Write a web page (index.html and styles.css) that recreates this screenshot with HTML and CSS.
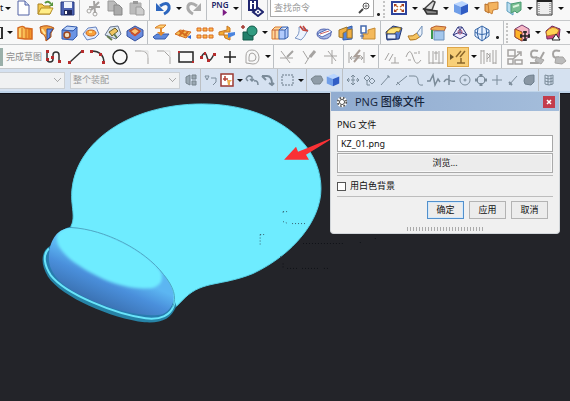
FILE: index.html
```html
<!DOCTYPE html>
<html lang="zh-CN">
<head>
<meta charset="utf-8">
<title>PNG 图像文件</title>
<link rel="stylesheet" href="styles.css">
</head>
<body>
<svg class="defs" aria-hidden="true">
  <defs>
    <linearGradient id="gold" x2="1"><stop stop-color="#ffe27a"/><stop offset="1" stop-color="#f08a20"/></linearGradient>
    <symbol id="cube" viewBox="0 0 18 18"><path fill="#b9d5ff" d="M2 5 10 2l6 3-7 3z"/><path fill="#709ee8" d="M2 5l7 3v8l-7-3z"/><path fill="#315dc5" d="M9 8l7-3v8l-7 3z"/></symbol>
    <symbol id="caret" viewBox="0 0 9 9"><path fill="#111" d="M2 3h6L5 6z"/></symbol>
  </defs>
</svg>
<header class="toolbars">
  <div class="bar bar-main">
    <span class="tail">t</span><button class="drop" aria-label="展开"><svg><use href="#caret"/></svg></button>
    <button class="tool" aria-label="新建"><svg viewBox="0 0 18 18"><path fill="#fff" stroke="#5262a5" d="M4 2h7l4 4v10H4z"/><path fill="#cfdcf4" stroke="#5262a5" d="M11 2v4h4"/></svg></button>
    <button class="tool" aria-label="打开"><svg viewBox="0 0 18 18"><path fill="#f4c94f" stroke="#a88122" d="M2 15V5h4l2 2h6v8z"/><path fill="#ffed87" stroke="#b48c24" d="M2 15l3-6h12l-3 6z"/><path stroke="#58953e" stroke-width="2" d="M9 4q3-3 6 1"/><path fill="#58953e" d="M17 3v4h-4z"/></svg></button>
    <button class="tool" aria-label="保存"><svg viewBox="0 0 18 18"><path fill="#4b61b1" stroke="#273b80" d="M3 3h13v13H3z"/><path fill="#eef2fb" d="M6 3h8v6H6z"/><path fill="#20285b" d="M6 11h8v5H6z"/><path fill="#fff" d="M7 12h2v3H7z"/></svg></button>
    <i class="sep"></i>
    <button class="tool" aria-label="剪切"><svg viewBox="0 0 18 18" class="gray"><path stroke-width="2" d="M15 3 7 11M10 2l1 12M5 8h11"/><circle cx="5" cy="12" r="2"/><circle cx="11" cy="15" r="2"/></svg></button>
    <button class="tool" aria-label="复制"><svg viewBox="0 0 18 18"><path fill="#bbb" stroke="#999" d="M2 2h6l3 3v7H2z"/><path fill="#aaa" stroke="#888" d="M8 6h5l3 3v7H8z"/></svg></button>
    <button class="tool" aria-label="粘贴"><svg viewBox="0 0 18 18"><path fill="#bbb" stroke="#aaa" d="M2 4h11v11H2z"/><path fill="#999" d="M5 2h5v3H5z"/><path fill="#ccc" stroke="#999" d="M8 8h5l3 3v5H8z"/></svg></button>
    <i class="sep"></i>
    <button class="tool" aria-label="撤销"><svg viewBox="0 0 18 18"><path stroke="#2d66bf" stroke-width="3" d="M6 7q7-5 9 0 1 5-5 8"/><path fill="#2d66bf" d="M2 4v8h8z"/></svg></button>
    <button class="drop" aria-label="撤销列表"><svg><use href="#caret"/></svg></button>
    <button class="tool" aria-label="重做"><svg viewBox="0 0 18 18"><path stroke="#aaa" stroke-width="3" d="M12 7Q5 2 3 7q-1 5 5 8"/><path fill="#aaa" d="M16 4v8H8z"/></svg></button>
    <i class="sep"></i>
    <button class="tool png" aria-label="PNG 导出">PNG<svg viewBox="0 0 8 8"><path fill="#7b1b83" d="M2 0l5 4-5 4z"/></svg></button>
    <button class="drop" aria-label="导出列表"><svg><use href="#caret"/></svg></button>
    <i class="sep"></i>
    <button class="tool" aria-label="信息"><svg viewBox="0 0 18 18"><path fill="#fff" stroke="#20266f" stroke-width="2" d="M3 1h8v10H3z"/><path stroke="#20266f" stroke-width="2" d="M7 2v2M7 5v5"/><path fill="#fff" stroke="#20266f" stroke-width="2" d="M7 13l5-4 5 4-5 4z"/><circle cx="12" cy="13" r="1" fill="#20266f"/></svg></button>
    <i class="sep"></i>
    <label class="search"><input type="search" aria-label="查找命令" placeholder="查找命令"><svg viewBox="0 0 14 14"><circle cx="9" cy="5" r="3" stroke="#555"/><circle cx="9" cy="5" r="1" stroke="#777"/><path stroke="#444" stroke-width="2" d="M6 8l-4 4"/></svg></label>
    <i class="more"></i><i class="grip"></i>
    <button class="tool" aria-label="适合窗口"><svg viewBox="0 0 18 18"><path fill="#fff" stroke="#2d449c" stroke-width="2" d="M2 3h14v12H2z"/><path stroke="#c46a2b" stroke-width="1.500" d="M5 6l3 2M13 6l-3 2M5 12l3-2M13 12l-3-2"/><path fill="#a33b22" d="M4 5h3L4 8zM14 5h-3l3 3zM4 13h3l-3-3zM14 13h-3l3-3z"/></svg></button>
    <button class="drop" aria-label="视图列表"><svg><use href="#caret"/></svg></button>
    <button class="tool" aria-label="定向视图"><svg viewBox="0 0 18 18"><path fill="#ddd" stroke="#444" stroke-width="1.500" d="M3 10l9-8 2 1-3 8z"/><path fill="#888" stroke="#333" stroke-width="1.500" d="M3 10l3 5h10v-3l-9-1z"/></svg></button>
    <button class="drop" aria-label="定向列表"><svg><use href="#caret"/></svg></button>
    <button class="tool" aria-label="着色"><svg><use href="#cube"/></svg></button>
    <button class="drop" aria-label="着色列表"><svg><use href="#caret"/></svg></button>
    <button class="tool" aria-label="显示截面"><svg viewBox="0 0 18 18"><path fill="#edaa58" stroke="#b66d27" d="M2 5l4 1v8l-4-2z"/><path fill="#f4b45f" stroke="#c98138" d="M5 4l10-1v7l-5 1-1 4-3-2z"/></svg></button>
    <button class="tool" aria-label="编辑截面"><svg viewBox="0 0 18 18"><path fill="#b9ddf0" stroke="#5f9ebc" d="M2 3l6 3v10l-6-4z"/><path fill="#79bd91" stroke="#4a9b70" d="M6 5l10-2v8l-4 3-2-2-4 2z"/><path stroke="#ddf5df" stroke-width="2" d="M8 8l6-2"/></svg></button>
    <button class="drop" aria-label="截面列表"><svg><use href="#caret"/></svg></button>
    <button class="tool" aria-label="背景"><svg viewBox="0 0 18 18"><path fill="#eee" stroke="#333" d="M1 1h15v15H1z"/><path stroke="#222" stroke-width="2" d="M1 2h15"/><path stroke="#666" stroke-dasharray="1 1" d="M3 4v11M14 4v11"/></svg></button>
    <button class="drop" aria-label="背景列表"><svg><use href="#caret"/></svg></button>
  </div>

  <div class="bar">
    <span class="edge"></span><button class="drop" aria-label="草图列表"><svg><use href="#caret"/></svg></button>
    <button class="tool" aria-label="拉伸"><svg viewBox="0 0 18 18"><path fill="url(#gold)" stroke="#d56920" stroke-width="1.500" d="M2 4q5-3 7 0l7 1v10H9l-7-1z"/><path stroke="#d56920" d="M6 4v11M10 5v10M13 5v9"/></svg></button>
    <button class="tool" aria-label="旋转"><svg viewBox="0 0 18 18"><path fill="#f2a140" stroke="#b65418" d="M2 3q7-3 14 1l-3 5v4l-5 4q0-6-5-8z"/><path fill="#6590ed" stroke="#30498d" d="M9 5h6l-3 4v4l-3 3z"/><path stroke="#ffe49b" stroke-width="2" d="M4 5l3 5"/></svg></button>
    <button class="tool" aria-label="孔"><svg viewBox="0 0 18 18"><path fill="#bdd4fa" stroke="#355cae" d="M2 6l5-4 10 1-3 4-12-1z"/><path fill="#6b94e4" stroke="#355cae" d="M2 6l11 1 4-4v9l-4 4-11-1z"/><circle cx="7" cy="11" r="3" fill="#f1ddbc" stroke="#9c451e" stroke-width="1.500"/></svg></button>
    <button class="tool" aria-label="凸台"><svg viewBox="0 0 18 18"><path fill="#dfebff" stroke="#6782bd" d="M1 10l5-6 8-1 3 7-4 4-8 2z"/><ellipse cx="9" cy="9" rx="5" ry="3" fill="#f9a13b" stroke="#c86822"/><path stroke="#ffdc89" stroke-width="2" d="M7 8h3"/></svg></button>
    <button class="tool" aria-label="垫块"><svg viewBox="0 0 18 18"><path fill="#dce6ee" stroke="#697792" d="M1 11l5-8 8-1 3 8-5 5z"/><path fill="#efc560" stroke="#68612e" d="M5 8l6-4 3 3-6 5z"/><path stroke="#647c51" stroke-width="2" d="M3 12l5 4M10 10l3 4"/></svg></button>
    <button class="tool" aria-label="抽壳"><svg viewBox="0 0 18 18"><path fill="#6a8cdf" stroke="#34509c" d="M1 7l8-5 8 4v6l-8 5-8-5z"/><path fill="#fbc277" stroke="#c25429" stroke-width="1.500" d="M4 7l5-3 5 3-5 4z"/><path stroke="#d9472d" d="M5 9l4 3 5-4"/></svg></button>
    <i class="sep"></i>
    <button class="tool" aria-label="抽取"><svg viewBox="0 0 18 18"><path fill="#5e89dc" stroke="#365baa" d="M1 13l4-3h12l-4 5H3z"/><path fill="#ffd274" stroke="#d8802a" d="M4 3l4-2h6l-3 3H3z"/><path fill="#e38b2e" d="M8 4h2v4h3l-4 4-4-4h3z"/></svg></button>
    <button class="tool" aria-label="偏置"><svg viewBox="0 0 18 18"><path fill="#f4bf55" stroke="#d56b20" d="M1 10l5-4 11 2-5 6z"/><path stroke="#d56b20" stroke-width="2" d="M5 7l8 5M10 6l-5 6M14 8l-4 4"/><path fill="#3268d3" d="M13 13l4-2v4z"/></svg></button>
    <button class="tool" aria-label="阵列特征"><svg viewBox="0 0 18 18"><path fill="#ffb84c" stroke="#d86b21" d="M1 4h4v3H1zm6 0h4v3H7zm6 0h4v3h-4zM1 11h4v3H1zm6 0h4v3H7zm6 0h4v3h-4z"/></svg></button>
    <button class="tool" aria-label="镜像特征"><svg viewBox="0 0 18 18"><path fill="#f3ac32" stroke="#c77724" d="M9 2l3 2v4H6v3H1V8l8-2zM6 11h6v5l-5-2z"/><path fill="#4b85df" d="M10 9l7-1v3l-7 3z"/></svg></button>
    <button class="tool" aria-label="合并"><svg viewBox="0 0 18 18"><path fill="#23806b" stroke="#145b4b" d="M3 8h10v8H3z"/><circle cx="12" cy="7" r="5" fill="#329c81" stroke="#145b4b"/><path stroke="#a33b32" stroke-width="1.500" d="M1 3h4M3 1v4"/></svg></button>
    <button class="drop" aria-label="布尔列表"><svg><use href="#caret"/></svg></button>
    <button class="tool" aria-label="修剪体"><svg viewBox="0 0 18 18"><path fill="#ffd79a" stroke="#d67b31" d="M1 6l3-3h7v10l-3 2H1z"/><path fill="#b2cbfc" stroke="#3660ad" d="M8 6l3-3h6v10l-3 2H8zM8 6h6l3-3M14 6v9"/><path stroke="#c7653a" d="M4 6v9M1 6h7"/></svg></button>
    <button class="tool" aria-label="拆分体"><svg viewBox="0 0 18 18"><path fill="#edf3fd" stroke="#7e98c6" d="M2 14q5-3 4-11l9 3q-4 8-7 10z"/><path stroke="#c4433a" stroke-width="1.500" d="M7 2l3 4 5 1M10 2l3 4"/></svg></button>
    <button class="tool" aria-label="偏置曲面"><svg viewBox="0 0 18 18"><ellipse cx="9" cy="10" rx="7" ry="5" fill="#a9bae8" stroke="#5263ae"/><path fill="#fff" stroke="#526ab4" d="M2 10l11-5 4 3-10 5z"/><path stroke="#cc6262" d="M5 10l9-3"/></svg></button>
    <button class="tool" aria-label="加厚"><svg viewBox="0 0 18 18"><path fill="#5284dc" stroke="#315ba9" d="M6 5l9-3v13l-9 1z"/><path fill="#f1b043" stroke="#9d762c" d="M2 6l8-3v4L6 9v5l-4-1zM10 6l5-1v9h-5z"/></svg></button>
    <button class="tool" aria-label="替换面"><svg viewBox="0 0 18 18"><path fill="#fff" stroke="#4469ad" stroke-width="1.500" d="M2 2h5v7H2z"/><path fill="#f4b95c" stroke="#c58a33" d="M9 6l7-2v11H4v-5h5z"/><path stroke="#4469ad" d="M3 9v6M1 12h4"/></svg></button>
    <i class="sep"></i>
    <button class="tool" aria-label="边倒圆"><svg viewBox="0 0 18 18"><path fill="#577fd8" stroke="#233875" d="M1 8l7-6 9 2-3 11-12 1z"/><path fill="#ffe47a" stroke="#9d7922" d="M2 8q3-6 14-4l-2 4q-3-2-5 2H2z"/><path fill="#e5edff" stroke="#233875" d="M2 10h9v5H2z"/></svg></button>
    <button class="tool" aria-label="倒斜角"><svg viewBox="0 0 18 18"><path fill="#f4c361" stroke="#b37821" d="M1 12q5 1 9-3l4 3q-5 5-11 4z"/><path fill="#e9f1fc" stroke="#7392b9" d="M10 9l5-7v8l-2 3z"/></svg></button>
    <button class="tool" aria-label="拔模"><svg viewBox="0 0 18 18"><path fill="#efad56" stroke="#b65b2e" d="M2 4l5-2 10 1-2 4-13-1z"/><path fill="#a4c7ec" stroke="#6c91bb" d="M5 7h10v9H5z"/><path stroke="#3d974d" stroke-width="2" d="M3 6v9"/></svg></button>
    <button class="tool" aria-label="曲面"><svg viewBox="0 0 18 18"><path fill="#eeeaff" stroke="#333b80" d="M2 11l5-8h4l5 8-7 4z"/><path stroke="#333b80" d="M7 3l2 3 2-3M2 11l7-3 7 3M9 6v2"/><circle cx="9" cy="8" r="2" stroke="#9c4d71"/></svg></button>
    <button class="tool" aria-label="网格曲面"><svg viewBox="0 0 18 18"><path fill="#e6f0ff" stroke="#3767a7" d="M2 6l7-4 7 4v6l-7 5-7-5z"/><path stroke="#3767a7" d="M9 2v15M2 8q7 5 14 0M5 4q-2 6 1 11M13 4q2 6-1 11"/></svg></button>
    <i class="more low"></i><i class="sep"></i><i class="grip"></i>
    <button class="tool" aria-label="移动面"><svg viewBox="0 0 18 18"><path fill="#f6b7c6" stroke="#793d71" d="M2 5l7-4 7 4v8l-7 4-7-4z"/><path fill="#ffb329" stroke="#a44c31" d="M2 5l7 3v9l-7-4z"/><path stroke="#222" stroke-width="1.500" d="M7 12h10M12 7v10M8 10v4M16 10v4M10 8h4M10 16h4"/></svg></button>
    <button class="drop" aria-label="移动列表"><svg><use href="#caret"/></svg></button>
    <button class="tool" aria-label="删除面"><svg viewBox="0 0 18 18"><path fill="#ce4779" stroke="#6e285f" d="M2 7l6-5 8 3-1 9-12 1z"/><path fill="#ffd353" stroke="#bc702d" d="M2 8q6-8 13-2l-2 4-10 2z"/><path fill="#fff" stroke="#222" d="M12 10l4 6H8z"/></svg></button>
    <button class="drop" aria-label="同步列表"><svg><use href="#caret"/></svg></button>
  </div>

  <div class="bar">
    <button class="finish"><i class="flag"></i>完成草图</button>
    <button class="tool" aria-label="轮廓"><svg viewBox="0 0 18 18"><path stroke="#333" stroke-width="1.500" d="M2 3v8q0 3 3 3t3-3V7q0-3 3-3t3 3v6"/><path fill="#b52c2c" d="M1 2h3v3H1zM6 8h3v3H6zM13 12h3v3h-3zM1 10h3v3H1z"/></svg></button>
    <button class="tool" aria-label="直线"><svg viewBox="0 0 18 18"><path stroke="#333" stroke-width="1.500" d="M3 14 15 3"/><path fill="#b52c2c" d="M1 13h3v3H1zM14 2h3v3h-3z"/></svg></button>
    <button class="tool" aria-label="圆弧"><svg viewBox="0 0 18 18"><path stroke="#333" stroke-width="1.500" d="M3 3q11 0 12 11"/><path fill="#b52c2c" d="M1 2h3v3H1zM10 5h3v3h-3zM13 13h3v3h-3z"/></svg></button>
    <button class="tool" aria-label="圆"><svg viewBox="0 0 18 18"><circle cx="9" cy="9" r="7" stroke="#222" stroke-width="1.500"/></svg></button>
    <button class="tool" aria-label="圆角"><svg viewBox="0 0 18 18" class="gray"><path d="M2 3h6q7 0 7 7v6"/><path stroke="#ddd" d="M8 3h7v7"/></svg></button>
    <button class="tool" aria-label="倒角"><svg viewBox="0 0 18 18" class="gray"><path d="M2 3h7l6 6v7"/><path stroke="#ddd" d="M9 3h6v6"/></svg></button>
    <button class="tool" aria-label="矩形"><svg viewBox="0 0 18 18"><path stroke="#222" stroke-width="1.500" d="M2 4h14v10H2z"/><path fill="#b52c2c" d="M1 3h2v2H1zM15 13h2v2h-2z"/></svg></button>
    <button class="tool" aria-label="样条"><svg viewBox="0 0 18 18"><path stroke="#333" stroke-width="1.500" d="M2 10q4-9 6-1t7-3"/><path fill="#b52c2c" d="M1 8h3v3H1zM5 4h2v3H5zM8 11h3v3H8zM14 5h3v3h-3z"/></svg></button>
    <button class="tool" aria-label="点"><svg viewBox="0 0 18 18"><path stroke="#222" stroke-width="1.500" d="M9 3v12M3 9h12"/></svg></button>
    <button class="tool" aria-label="偏置曲线"><svg viewBox="0 0 18 18" class="gray"><path d="M3 15V8q0-6 6-6t7 7q0 7-6 7z"/><path d="M6 13V9q0-4 3-4t4 4q0 4-3 4z"/></svg></button>
    <button class="drop" aria-label="曲线列表"><svg><use href="#caret"/></svg></button><i class="sep"></i>
    <button class="tool" aria-label="快速修剪"><svg viewBox="0 0 18 18" class="gray"><path d="M3 3l9 12M2 10h13"/><path stroke-width="2" d="M15 3l-6 6"/></svg></button>
    <button class="tool" aria-label="快速延伸"><svg viewBox="0 0 18 18" class="gray"><path d="M3 3l5 8M5 16l5-8"/><path stroke-width="3" d="M15 3l-5 6"/></svg></button>
    <button class="tool" aria-label="制作拐角"><svg viewBox="0 0 18 18" class="gray"><path d="M2 8h13M10 2v14M10 8l4 5M6 3l4 5"/></svg></button>
    <i class="sep"></i>
    <button class="tool" aria-label="快速尺寸"><svg viewBox="0 0 18 18" class="gray"><path d="M1 4v11M16 4v11M2 10h13M4 8l-2 2 2 2M13 8l2 2-2 2"/><path stroke="#aa9f98" stroke-width="2" d="M12 2L7 8h4l-5 6"/></svg></button>
    <button class="drop" aria-label="尺寸列表"><svg><use href="#caret"/></svg></button><i class="sep"></i>
    <button class="tool" aria-label="几何约束"><svg viewBox="0 0 18 18" class="gray"><path d="M2 12l4-7M6 13l4-7M8 15h8M12 9v6"/></svg></button>
    <button class="tool" aria-label="对称"><svg viewBox="0 0 18 18" class="gray"><path d="M1 9q4-11 7 0t8 3M9 5h3M14 3v3M3 12h3"/></svg></button>
    <button class="tool" aria-label="显示约束"><svg viewBox="0 0 18 18" class="gray"><path d="M2 3v13M6 3v13M12 3v13M16 3v13M2 15h14M7 5h4M9 3v9"/></svg></button>
    <button class="tool active" aria-label="自动约束" aria-pressed="true"><svg viewBox="0 0 18 18"><path fill="#6b5428" d="M1 6l4 3-4 3z"/><path stroke="#8b672b" stroke-width="1.500" d="M7 9l5-6M11 9l5-6M8 15h8M12 10v5"/></svg></button>
    <button class="drop" aria-label="约束列表"><svg><use href="#caret"/></svg></button>
    <button class="tool" aria-label="参考"><svg viewBox="0 0 18 18" class="gray"><path d="M1 2v14M4 2v14M13 2v14M16 2v14M1 3h3M13 15h3M7 5v9M10 5v9M7 5l3 3-3 3"/></svg></button>
    <i class="sep"></i>
    <button class="tool" aria-label="转换"><svg viewBox="0 0 18 18" class="gray"><path stroke-width="1.500" d="M2 2h7v6H2zM9 12h7v4H9zM2 11h5v5H2zM7 11l7-6M11 4h4v4"/></svg></button>
    <button class="tool" aria-label="备选解"><svg viewBox="0 0 18 18" class="gray"><path stroke-width="2" d="M10 3q-7-2-7 3t6 3M2 15h8l6-11"/><path fill="#bbb" d="M9 9l7 3-3 4-6-3z"/></svg></button>
    <button class="tool" aria-label="投影曲线"><svg viewBox="0 0 18 18" class="gray"><path stroke-width="2" d="M10 3q-7-2-7 3t6 3"/><path fill="#bbb" d="M6 9h7l3 4-4 3-7-1z"/></svg></button>
  </div>

  <div class="bar bar-select">
    <select class="filter" aria-label="类型过滤器"><option></option></select>
    <select class="scope" aria-label="选择范围"><option>整个装配</option></select>
    <button class="mini" aria-label="装配"><svg viewBox="0 0 16 16"><path fill="#9aa8b3" stroke="#78858e" d="M3 5l4-2v10l-4-2zM9 3h4v4H9zM9 9h4v4H9z"/></svg></button><i class="sep"></i>
    <button class="mini" aria-label="常规"><svg viewBox="0 0 16 16" class="steel"><path d="M2 4l2 4 2-4zM8 6h5v4l-3 3"/></svg></button>
    <button class="mini" aria-label="选择过滤"><svg viewBox="0 0 16 16"><path fill="#fff" stroke="#9c3932" stroke-width="1.500" d="M2 2h12v12H2z"/><path stroke="#b54339" stroke-width="1.500" d="M4 7h5M6 4v5"/><path fill="#edaf50" d="M8 8h5l-2 2v3H9z"/></svg></button>
    <button class="drop" aria-label="过滤列表"><svg><use href="#caret"/></svg></button>
    <button class="mini" aria-label="选择链"><svg viewBox="0 0 16 16" class="steel"><path stroke-width="1.500" d="M2 7q2-5 6-2v3M6 7l2 2 2-2M10 9q4-1 4 4M4 9l-2-2"/></svg></button>
    <button class="mini" aria-label="反向选择"><svg viewBox="0 0 16 16" class="steel"><path stroke-width="2" d="M2 4h5q5 0 5 8M2 4l4 4M9 11l3 2 2-2"/></svg></button><i class="sep"></i>
    <button class="mini" aria-label="矩形选择"><svg viewBox="0 0 16 16"><path stroke="#687886" stroke-dasharray="2 1" d="M2 3h11v10H2z"/></svg></button>
    <button class="drop" aria-label="选择列表"><svg><use href="#caret"/></svg></button><i class="sep"></i>
    <button class="mini" aria-label="高亮隐藏边"><svg viewBox="0 0 16 16"><path fill="#8f9ca7" stroke="#78858e" d="M2 7l4-3h6l2 4-3 4H5z"/></svg></button>
    <button class="mini" aria-label="着色显示"><svg><use href="#cube"/></svg></button><i class="sep"></i>
    <button class="mini" aria-label="移动对象"><svg viewBox="0 0 16 16" class="steel"><path d="M6 5l2-2 2 2M6 11l2 2 2-2M4 6L2 8l2 2M12 6l2 2-2 2M7 7h2v2H7zM8 3v3M8 10v3M2 8h3M11 8h3"/></svg></button>
    <button class="mini" aria-label="捕捉点"><svg viewBox="0 0 16 16" class="steel"><path d="M3 6l3-3 3 3-3 3zM8 9l3-3 3 3-3 3zM6 9v4h3"/></svg></button>
    <button class="mini" aria-label="端点"><svg viewBox="0 0 16 16" class="steel"><path d="M4 13l8-9M10 4h2v2"/></svg></button>
    <button class="mini" aria-label="中点"><svg viewBox="0 0 16 16" class="steel"><path d="M3 13L14 4M4 10l3 3"/></svg></button>
    <button class="mini" aria-label="控制点"><svg viewBox="0 0 16 16" class="steel"><path d="M0 4h5q4 0 4 5t5 4"/></svg></button>
    <button class="mini" aria-label="极点"><svg viewBox="0 0 16 16" class="steel"><path stroke-width="1.500" d="M2 9h3l3-6 2 10 3-6 2 3"/></svg></button>
    <button class="mini" aria-label="交点"><svg viewBox="0 0 16 16" class="steel"><path stroke-width="1.500" d="M8 3v10M3 10q2-4 5-2t6 1"/></svg></button>
    <button class="mini" aria-label="圆心"><svg viewBox="0 0 16 16" class="steel"><circle cx="8" cy="8" r="5"/><circle cx="8" cy="8" r="1"/></svg></button>
    <button class="mini" aria-label="象限点"><svg viewBox="0 0 16 16" class="steel"><circle cx="8" cy="8" r="4"/><path stroke-width="3" d="M8 2v3M8 11v3M2 8h3M11 8h3"/></svg></button>
    <button class="mini" aria-label="现有点"><svg viewBox="0 0 16 16" class="steel"><path d="M8 3v10M3 8h10"/></svg></button>
    <button class="mini" aria-label="曲线上的点"><svg viewBox="0 0 16 16" class="steel"><path d="M4 13l8-9"/><path stroke-width="2" d="M4 10l3 3"/></svg></button>
    <button class="mini" aria-label="面上的点"><svg viewBox="0 0 16 16"><path fill="#8996a3" stroke="#6e7e8c" d="M3 9q0-6 10-6v7l-3 3-6-1z"/></svg></button><i class="sep"></i>
    <button class="mini" aria-label="网格点"><svg viewBox="0 0 16 16" class="steel"><path d="M4 3q4 2 8 0v9q-4 2-8 0zM4 6q4 2 8 0M4 9q4 2 8 0M7 4v9M10 4v9"/></svg></button>
  </div>
</header>

<main class="canvas">
  <svg class="model" viewBox="0 93 570 308" preserveAspectRatio="xMinYMin meet" role="img" aria-label="鼠标垫">
    <defs>
      <linearGradient id="side" gradientUnits="userSpaceOnUse" x1="112" y1="268" x2="96" y2="304"><stop stop-color="#5cb6f2"/><stop offset=".4" stop-color="#4a8fdb"/><stop offset="1" stop-color="#3a70b0"/></linearGradient>
      <filter id="soft" x="-20%" y="-20%" width="140%" height="140%"><feGaussianBlur stdDeviation="1.400"/></filter>
      <clipPath id="restClip"><path d="M49 258C49 240 57 226 76 227C105 231 147 251 166 276C177 291 178 306 163 314C139 319 92 304 66 286C56 278 49 269 49 258Z"/></clipPath>
    </defs>
    <path fill="#6eecff" stroke="#55cfe5" d="M71 226C75 219 73 211 72 200C69 145 127 103 203 103C270 103 322 139 322 188C322 220 294 254 254 273C222 286 204 280 186 297C183 300 180 303 177 306L100 280Z"/>
    <path fill="#2683a6" d="M71 226C61 229 54 237 51 245C41 250 40 263 48 276C62 297 112 318 145 322C163 323 171 319 177 306L168 279Z"/>
    <path fill="#287caf" stroke="#69e5fa" stroke-width="2" d="M49 248C42 255 45 266 51 275C66 294 116 314 146 318C162 320 171 314 174 306C177 297 172 287 166 278"/>
    <path fill="url(#side)" d="M49 258C49 240 57 226 76 227C105 231 147 251 166 276C177 291 178 306 163 314C139 319 92 304 66 286C56 278 49 269 49 258Z"/>
    <g clip-path="url(#restClip)"><path fill="#6eecff" filter="url(#soft)" d="M57 235C60 225 75 224 91 228C120 234 148 252 161 270C166 282 158 288 148 288C118 289 90 273 72 260C62 252 55 242 57 235Z"/></g>
    <path stroke="#4fa9c4" d="M72 227C105 229 145 249 164 274C174 286 178 297 173 307"/>
    <path class="ghost" d="M284 211h4M284 211v2M284 221l5 2M293 223h13M261 234h4M261 234v10M281 256l3 2"/>
    <path class="ghost ghost-dark" d="M284 263v4M288 268h10M303 268h16M325 268h4M304 243h42M361 242h2M376 238h2"/>
    <path fill="#fa3135" d="M285 159l12-13 2 5 32-13h2l-26 16 3 5z"/>
  </svg>

  <form class="dialog" role="dialog" aria-labelledby="dialog-title">
    <div class="title">
      <svg class="gear" viewBox="0 0 14 14"><circle cx="7" cy="7" r="6" fill="#fff"/><circle cx="7" cy="7" r="5" stroke="#555" stroke-width="2" stroke-dasharray="2 2"/><circle cx="7" cy="7" r="3" fill="#fff" stroke="#333"/></svg>
      <h1 id="dialog-title">PNG 图像文件</h1>
      <button type="button" class="close" aria-label="关闭"><svg viewBox="0 0 12 12"><path stroke="#fff" stroke-width="1.500" d="M4 4l4 4M8 4l-4 4"/></svg></button>
    </div>
    <div class="body">
      <label class="caption" for="file">PNG 文件</label>
      <input class="file" id="file" type="text" value="KZ_01.png">
      <button type="button" class="browse">浏览...</button>
      <label class="check"><input type="checkbox">用白色背景</label>
      <div class="actions"><button type="button" class="primary">确定</button><button type="button">应用</button><button type="button">取消</button></div>
      <i class="resize"></i>
    </div>
  </form>
</main>
</body>
</html>
```
FILE: styles.css
```css
* { box-sizing: border-box; }
html, body { height: 100%; }
body {
  margin: 0;
  display: flex;
  flex-direction: column;
  overflow: hidden;
  background: #232429;
  color: #111;
  font: 9px/12px "Noto Sans", "Noto Sans CJK SC", sans-serif;
}
button, input, select { font: inherit; color: inherit; margin: 0; }
button { padding: 0; border: 0; background: none; }
svg { display: block; fill: none; }
.defs { position: absolute; width: 0; height: 0; }
.gray { stroke: #a5a3a1; }
.steel { stroke: #7b8b99; }

.toolbars { flex: none; }
.bar {
  display: flex;
  align-items: center;
  height: 24px;
  overflow: hidden;
  border-bottom: 1px solid #c6c8ca;
  background: #f8f8f8;
}
.bar > * { flex: none; }
.bar-main { height: 21px; padding-bottom: 4px; }
.bar-select { background: #d5e1f0; border-bottom: 2px solid #bfd4e9; }
.tool { display: grid; place-items: center; width: 22px; height: 20px; }
.tool svg { width: 18px; height: 18px; }
.mini { display: grid; place-items: center; width: 16px; height: 18px; }
.mini svg { width: 16px; height: 16px; }
.drop, .drop svg { width: 9px; height: 9px; }
.sep { width: 4px; height: 24px; border-left: 1px solid #bcc0c4; margin-left: 1px; margin-right: -1px; }
.grip { width: 5px; height: 20px; border-left: 2px dotted #c4c4c4; }
.more { align-self: flex-end; width: 9px; height: 3px; background: radial-gradient(circle, #222 1px, transparent 2px); }
.low { margin-bottom: 5px; }
.tail { width: 3px; }
.edge { width: 5px; height: 12px; border: solid #333; border-width: 1px 2px 1px 0; margin-left: -2px; margin-right: 2px; }
.active { background: #f8cf78; outline: 1px solid #dfa648; outline-offset: -1px; }
.png { align-content: center; font-weight: 600; font-size: 8px; line-height: 8px; color: #202365; }
.png svg { width: 7px; height: 7px; margin-left: 8px; }
.finish { display: flex; align-items: center; gap: 3px; width: 43px; color: #8c8c8c; white-space: nowrap; }
.flag { width: 3px; height: 18px; background: #9aafa9; }

.search { display: flex; align-items: center; width: 104px; height: 17px; padding-right: 2px; border: 1px solid #aaa; border-top: 0; background: #fff; }
.search input { flex: 1; min-width: 0; border: 0; padding: 0 3px; background: none; outline: 0; }
.search input::placeholder { color: #999; }
.search svg { width: 14px; height: 14px; }
.filter, .scope {
  appearance: none;
  height: 17px;
  padding: 0 2px;
  border: 1px solid #cbcfd3;
  border-radius: 0;
  color: #999;
  background: linear-gradient(45deg, transparent 45%, #aaa 45% 60%, transparent 60%) right 6px center / 4px 4px no-repeat,
    linear-gradient(-45deg, transparent 45%, #aaa 45% 60%, transparent 60%) right 3px center / 4px 4px no-repeat, #f0f1f2;
}
.filter { width: 65px; border-left: 0; }
.scope { width: 110px; margin: 0 3px 0 5px; }

.canvas { position: relative; flex: 1; min-height: 0; border-top: 1px solid #111219; }
.model { width: 100%; height: 100%; }
.ghost { stroke: #202936; stroke-dasharray: 1 2; opacity: .7; }
.ghost-dark { stroke: #070a10; }

.dialog {
  position: absolute;
  top: -2px;
  right: 10px;
  width: 230px;
  overflow: hidden;
  border: 1px solid #d1d5d9;
  border-top: 0;
  border-radius: 0 0 4px 4px;
  background: #f0f0f0;
}
.title { display: flex; align-items: center; gap: 7px; height: 19px; padding: 0 4px 0 5px; background: linear-gradient(90deg, #91acd0, #a4bddb); }
.gear { width: 12px; height: 12px; }
.title h1 { flex: 1; margin: 0; font: 500 11px/16px "Open Sans", "Noto Sans CJK SC", sans-serif; color: #15243b; }
.close { width: 12px; height: 12px; background: #c33c4b; }
.body { display: flex; flex-direction: column; padding: 7px 6px 2px; }
.caption { line-height: 14px; margin-bottom: 3px; }
.file { height: 17px; padding: 0 3px; border: 1px solid #a7a7a7; background: #fff; border-radius: 0; }
.browse { height: 20px; margin-top: 1px; border: 1px solid #aaa; background: #ececec; box-shadow: inset 0 0 0 1px #f8f8f8; }
.check { display: flex; align-items: center; gap: 4px; height: 22px; margin-top: 2px; border: solid #bdbdbd; border-width: 1px 0; }
.check input { appearance: none; width: 9px; height: 9px; border: 1px solid #555; background: #fff; }
.actions { display: flex; justify-content: flex-end; gap: 5px; padding: 4px 5px 0; }
.actions button { width: 37px; height: 18px; border: 1px solid #b3b3b3; background: #ececec; }
.actions .primary { border-color: #5290cc; box-shadow: inset 0 0 0 1px #d4e9fb; }
.resize { align-self: center; width: 78px; height: 4px; margin-top: 8px; background: radial-gradient(circle, #aaa 1px, transparent 1px) 0 0 / 3px 2px; }
```
